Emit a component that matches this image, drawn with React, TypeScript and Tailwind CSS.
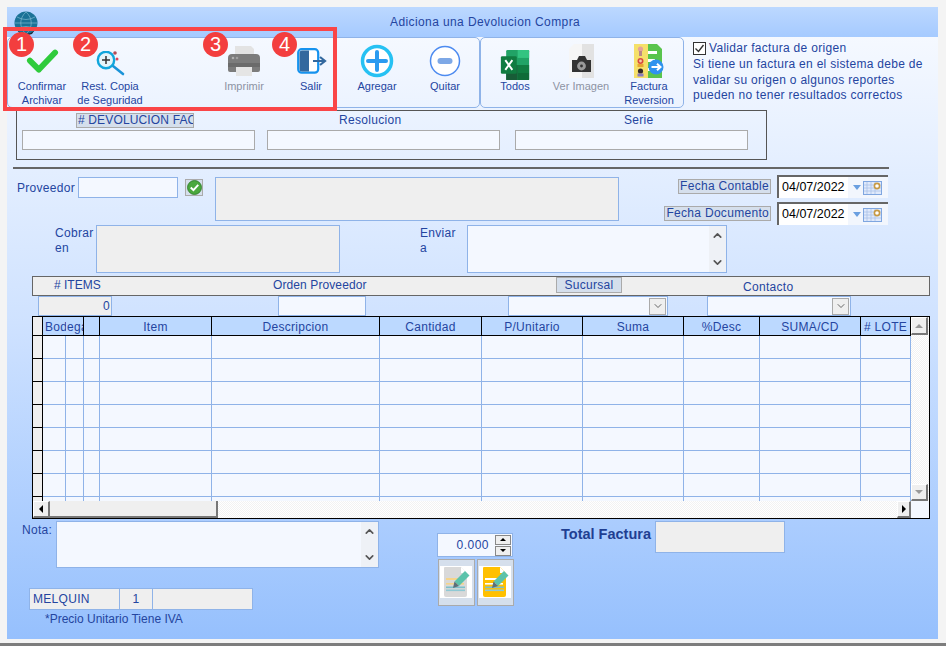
import { ChevronDown, ChevronUp } from "lucide-react";

const txt = "text-[#24459f]";

function Btn({ w, l1, l2, children, gray, ml }: { w: string; l1: string; l2?: string; children: React.ReactNode; gray?: boolean; ml?: string }) {
  return (
    <div className={`flex flex-col items-center shrink-0 ${w} ${ml ?? ""}`}>
      <div className="h-[34px] mt-[6px] flex items-center justify-center">{children}</div>
      <div className={`mt-[1px] text-[11px] leading-[14px] text-center whitespace-nowrap tracking-normal ${gray ? "text-[#8d93a3]" : txt}`}>
        {l1}
        {l2 && <br />}
        {l2}
      </div>
    </div>
  );
}

const CheckIcon = () => (
  <svg width="33" height="27" viewBox="0 0 36 30"><path d="M4 14 L14 24 L32 5" fill="none" stroke="#2fcb3c" strokeWidth="6.5" strokeLinecap="round" strokeLinejoin="round" /></svg>
);
const MagIcon = () => (
  <svg width="30" height="26" viewBox="0 0 30 26" className="mt-[5px] ml-[2px]">
    <circle cx="19" cy="2" r="1.8" fill="#b44a55" /><circle cx="21" cy="8" r="1.5" fill="#e0455a" />
    <path d="M17 15 L27 23" stroke="#1b93d8" strokeWidth="2.6" strokeLinecap="round" />
    <circle cx="10" cy="9" r="8.2" fill="#e6f6fb" stroke="#12a6dc" strokeWidth="2.4" />
    <path d="M10 5 V13 M6 9 H14" stroke="#333" strokeWidth="1.5" />
  </svg>
);
const PrinterIcon = () => (
  <svg width="34" height="32" viewBox="0 0 34 32">
    <path d="M8 1 H24 L27 4 V10 H8 Z" fill="#e3e3e3" />
    <path d="M1 13 Q1 9 5 9 H29 Q33 9 33 13 V25 Q33 27 31 27 H3 Q1 27 1 25 Z" fill="#7c7c7c" />
    <rect x="1" y="18" width="32" height="4" fill="#6b6b6b" />
    <circle cx="6" cy="13" r="1.3" fill="#b0b0b0" /><circle cx="10" cy="13" r="1.3" fill="#a0a0a0" />
    <rect x="9" y="22" width="16" height="9" fill="#e5e5e5" />
  </svg>
);
const DoorIcon = () => (
  <svg width="30" height="26" viewBox="0 0 30 26" className="ml-[1px]">
    <rect x="1.2" y="1.2" width="20" height="23.5" rx="3.5" fill="#fff" stroke="#1592ee" strokeWidth="2.2" />
    <path d="M2.5 5 Q2.5 2.5 5 2.5 H12 V23.5 H5 Q2.5 23.5 2.5 21 Z" fill="#33689e" />
    <path d="M16 13 H27 M23 9 L28 13 L23 17" fill="none" stroke="#33689e" strokeWidth="2.2" />
  </svg>
);
const PlusIcon = () => (
  <svg width="34" height="34" viewBox="0 0 34 34">
    <circle cx="17" cy="17" r="14.5" fill="#fff" stroke="#26c1f3" strokeWidth="3.5" />
    <path d="M17 8 V26 M8 17 H26" stroke="#2b9bf0" strokeWidth="4" strokeLinecap="round" />
  </svg>
);
const MinusIcon = () => (
  <svg width="32" height="32" viewBox="0 0 32 32">
    <circle cx="16" cy="16" r="14.5" fill="#fff" stroke="#4d8bf0" strokeWidth="1.5" />
    <rect x="8.5" y="13" width="15" height="6" rx="3" fill="#7ea8e6" />
  </svg>
);
const ExcelIcon = () => (
  <svg width="32" height="30" viewBox="0 0 32 34" className="mt-[8px]">
    <rect x="6" y="0" width="26" height="34" rx="1.5" fill="#21a366" />
    <rect x="19" y="0" width="13" height="9" fill="#33c481" />
    <rect x="19" y="17" width="13" height="9" fill="#107c41" />
    <rect x="6" y="17" width="13" height="17" fill="#185c37" />
    <rect x="19" y="26" width="13" height="8" fill="#0f6b38" />
    <rect x="0" y="7" width="18" height="20" rx="1.5" fill="#107c41" />
    <path d="M5 11.5 L13 22.5 M13 11.5 L5 22.5" stroke="#fff" strokeWidth="2.2" />
  </svg>
);
const CamDocIcon = () => (
  <svg width="26" height="34" viewBox="0 0 26 34">
    <path d="M1 5 L6 0 H14 V34 H1 Z" fill="#f6f6f6" />
    <rect x="14" y="0" width="12" height="34" fill="#e2e2e2" />
    <path d="M4 16 H9 L11 12 H17 L19 16 H23 V28 H4 Z" fill="#333" />
    <circle cx="13.5" cy="22" r="4.4" fill="#9a9a9a" /><circle cx="13.5" cy="22" r="1.4" fill="#333" />
  </svg>
);
const FacturaIcon = () => (
  <svg width="30" height="34" viewBox="0 0 30 34">
    <rect x="0" y="0" width="14" height="34" fill="#f5e06a" />
    <path d="M14 0 H23 L28 5 V34 H14 Z" fill="#59c44d" />
    <rect x="14" y="7" width="9" height="3" fill="#fff" /><rect x="14" y="15" width="7" height="3" fill="#fff" /><rect x="14" y="24" width="7" height="3" fill="#fff" />
    <circle cx="6.5" cy="5" r="2.6" fill="#e3a39a" /><rect x="5" y="7" width="3" height="5" fill="#b88" />
    <circle cx="6.5" cy="17" r="3" fill="#d84b3f" /><circle cx="6.5" cy="17" r="1.4" fill="#f4c9a8" /><rect x="3.5" y="20" width="6" height="3" fill="#e8a530" />
    <circle cx="6.5" cy="27" r="2.6" fill="#33292a" /><rect x="3.5" y="29.5" width="6" height="3" fill="#8a7ac0" />
    <circle cx="22" cy="23" r="7.5" fill="#2f92ee" />
    <path d="M17.5 23 H26 M23 19.8 L26.5 23 L23 26.2" fill="none" stroke="#fff" strokeWidth="2" />
  </svg>
);
const DocPen = ({ color, line }: { color: string; line: string }) => (
  <svg width="32" height="32" viewBox="0 0 32 32" className="bg-white">
    <path d="M4 2 Q4 1 5 1 H21 L27 7 V29 Q27 31 25 31 H6 Q4 31 4 29 Z" fill={color} />
    <path d="M21 1 L27 7 H21 Z" fill="#fff" />
    <rect x="6" y="12" width="13" height="2" fill={line} />
    <rect x="6" y="17" width="18" height="1.6" fill={line} />
    <rect x="6" y="20.5" width="19" height="1.6" fill="#7cc0cc" />
    <rect x="6" y="23.5" width="19" height="1.6" fill="#8fc9d4" />
    <path d="M25 5 L29.5 9.5 L19 20 L14.5 15.5 Z" fill="#5cc3ab" />
    <path d="M14.5 15.5 L19 20 L13 22 Z" fill="#5d6f7a" />
  </svg>
);
const Globe = () => (
  <svg width="24" height="24" viewBox="0 0 24 24">
    <circle cx="12" cy="12" r="11.5" fill="#1b7297" />
    <path d="M1 12 H23 M12 1 C5 7 5 17 12 23 M12 1 C19 7 19 17 12 23 M3 6 Q12 11 21 6 M3 18 Q12 13 21 18" fill="none" stroke="#8fc4d8" strokeWidth="0.6" />
    <path d="M4 20 Q12 26 20 20 L18 23 Q12 25 6 23 Z" fill="#1d2b36" />
  </svg>
);
const Calendar = () => (
  <svg width="19" height="14" viewBox="0 0 19 14">
    <rect x="0.5" y="0.5" width="18" height="13" fill="#dfe9fb" stroke="#7fa6e0" />
    <path d="M4 1 V13 M8 1 V13 M12 1 V13 M1 4 H18 M1 7 H18 M1 10 H18" stroke="#a9c2ea" strokeWidth="0.8" />
    <circle cx="14" cy="5" r="2.6" fill="#fff" stroke="#c79a45" strokeWidth="1.6" />
  </svg>
);

function DateField() {
  return (
    <div className="flex w-[111px] h-[23px] bg-[#f2f6fd] border-t-2 border-l-2 border-t-[#666] border-l-[#666]">
      <div className="w-[69px] h-full bg-white text-[12.5px] tracking-normal leading-[21px] pl-[3px] text-black whitespace-nowrap">04/07/2022</div>
      <div className="flex items-center pl-[5px] gap-[2px]">
        <div className="w-0 h-0 border-l-[4px] border-r-[4px] border-t-[5px] border-l-transparent border-r-transparent border-t-[#6a9fe0]" />
        <Calendar />
      </div>
    </div>
  );
}

function VStrip({ h }: { h: string }) {
  return (
    <div className={`w-[17px] ${h} bg-[#eef1f6] flex flex-col justify-between items-center py-[3px] shrink-0`}>
      <ChevronUp size={13} strokeWidth={3} color="#555" />
      <ChevronDown size={13} strokeWidth={3} color="#555" />
    </div>
  );
}

function SelectBox({ w, ml }: { w: string; ml: string }) {
  return (
    <div className={`${w} ${ml} h-[20px] border border-[#8fb3e8] bg-[#f4f8ff] flex items-center justify-end pr-[1px] shrink-0`}>
      <div className="w-[17px] h-[17px] bg-[#efefef] border border-[#aaa] flex items-center justify-center">
        <ChevronDown size={12} strokeWidth={1.6} color="#444" />
      </div>
    </div>
  );
}

const cols: [string, number][] = [
  ["", 10],
  ["Bod", 23],
  ["ega", 18],
  ["", 16],
  ["Item", 112],
  ["Descripcion", 168],
  ["Cantidad", 102],
  ["P/Unitario", 101],
  ["Suma", 101],
  ["%Desc", 76],
  ["SUMA/CD", 101],
  ["# LOTE", 50],
];
const rows = [0, 1, 2, 3, 4, 5, 6, 7];

function ScrollBtn({ children, cls }: { children: React.ReactNode; cls: string }) {
  return (
    <div className={`${cls} bg-[#efefef] border-r-2 border-b-2 border-r-[#777] border-b-[#777] border-t border-l border-t-white border-l-white flex items-center justify-center shrink-0`}>
      {children}
    </div>
  );
}

const hatch = "bg-[repeating-conic-gradient(#f2f2f2_0%_25%,#ffffff_0%_50%)] bg-[length:2px_2px]";

export default function App() {
  return (
    <div className="relative w-[946px] h-[646px] bg-[#f4f4f4] pt-[7px] pl-[7px] font-['Liberation_Sans',Arial,sans-serif] tracking-[0.3px] text-[12px] overflow-hidden">
      <div className="w-[931px] h-[632px] flex flex-col bg-gradient-to-b from-[#f9fbff] via-[#cfe2ff] to-[#96c0fd]">
        {/* Title */}
        <div className="h-[30px] shrink-0 flex items-center bg-gradient-to-b from-[#bcd8ff] to-[#a5caff]">
          <div className="ml-[7px] mt-[2px] shrink-0"><Globe /></div>
          <div className={`ml-[352px] tracking-[0.4px] ${txt}`}>Adiciona una Devolucion Compra</div>
        </div>

        {/* Toolbar */}
        <div className="h-[71px] shrink-0 flex">
          <div className="w-[473px] h-[71px] border border-[#8fb3e8] rounded-[5px] flex shrink-0">
            <Btn w="w-[68px]" l1="Confirmar" l2="Archivar"><CheckIcon /></Btn>
            <Btn w="w-[68px]" l1="Rest. Copia" l2="de Seguridad"><MagIcon /></Btn>
            <Btn w="w-[68px]" ml="ml-[66px]" l1="Imprimir" gray><PrinterIcon /></Btn>
            <Btn w="w-[66px]" l1="Salir"><DoorIcon /></Btn>
            <Btn w="w-[66px]" l1="Agregar"><PlusIcon /></Btn>
            <Btn w="w-[68px]" ml="ml-[1px]" l1="Quitar"><MinusIcon /></Btn>
          </div>
          <div className="w-[204px] h-[71px] border border-[#8fb3e8] rounded-[5px] flex shrink-0 pl-[1px]">
            <Btn w="w-[66px]" l1="Todos"><ExcelIcon /></Btn>
            <Btn w="w-[66px]" l1="Ver Imagen" gray><CamDocIcon /></Btn>
            <Btn w="w-[70px]" l1="Factura" l2="Reversion"><FacturaIcon /></Btn>
          </div>
          <div className={`ml-[9px] mt-[4px] leading-[15.5px] whitespace-nowrap ${txt}`}>
            <div className="flex items-center gap-[3px]">
              <div className="w-[13px] h-[13px] border border-[#333] bg-white flex items-center justify-center shrink-0">
                <svg width="11" height="11" viewBox="0 0 11 11"><path d="M1.5 5.5 L4.5 8.5 L9.5 2" fill="none" stroke="#333" strokeWidth="1.4" /></svg>
              </div>
              <span className="leading-[14px]">Validar factura de origen</span>
            </div>
            <div className="mt-[2px]">Si tiene un factura en el sistema debe de</div>
            <div>validar su origen o algunos reportes</div>
            <div>pueden no tener resultados correctos</div>
          </div>
        </div>

        {/* Fieldset */}
        <div className="mt-[2px] ml-[9px] w-[751px] h-[50px] shrink-0 border border-[#555] flex pl-[5px] gap-[12px]">
          <div className="w-[233px] shrink-0">
            <div className="ml-[54px] mt-[2px] w-[118px] h-[15px] bg-[#d5dfec] border border-[#aaa] overflow-hidden whitespace-nowrap leading-[13px] pl-[1px] tracking-[0.15px] text-[#24459f]">
              # DEVOLUCION FAC
            </div>
            <div className="mt-[2px] h-[20px] bg-[#f4f8ff] border border-[#aaa]" />
          </div>
          <div className="w-[233px] shrink-0">
            <div className={`h-[15px] mt-[2px] pl-[72px] leading-[15px] ${txt}`}>Resolucion</div>
            <div className="mt-[2px] h-[20px] bg-[#f4f8ff] border border-[#aaa]" />
          </div>
          <div className="w-[233px] shrink-0 ml-[3px]">
            <div className={`h-[15px] mt-[2px] pl-[109px] leading-[15px] ${txt}`}>Serie</div>
            <div className="mt-[2px] h-[20px] bg-[#f4f8ff] border border-[#aaa]" />
          </div>
        </div>

        <div className="mt-[7px] ml-[6px] w-[876px] h-[2px] bg-[#666] shrink-0" />

        {/* Proveedor */}
        <div className="mt-[6px] h-[50px] flex shrink-0">
          <div className={`ml-[10px] w-[61px] mt-[4px] shrink-0 ${txt}`}>Proveedor</div>
          <div className="mt-[2px] w-[100px] h-[21px] border border-[#8fb3e8] bg-[#f4f8ff] shrink-0" />
          <div className="ml-[7px] mt-[4px] w-[18px] h-[17px] bg-[#d5dfec] border border-[#aaa] flex items-center justify-center shrink-0">
            <svg width="15" height="15" viewBox="0 0 14 14"><circle cx="7" cy="7" r="6.5" fill="#4aa83e" stroke="#2d7a28" strokeWidth="0.8" /><path d="M3.5 7 L6 9.5 L10.5 4.5" fill="none" stroke="#fff" strokeWidth="1.8" /></svg>
          </div>
          <div className="ml-[12px] mt-[2px] w-[404px] h-[44px] bg-[#efefef] border border-[#8fb3e8] shrink-0" />
          <div className="w-[269px] flex flex-col items-end shrink-0">
            <div className="flex items-start gap-[6px]">
              <div className={`mt-[4px] h-[15px] px-[1px] leading-[13px] bg-[#d5dfec] border border-[#aaa] whitespace-nowrap ${txt}`}>Fecha Contable</div>
              <DateField />
            </div>
            <div className="flex items-start gap-[6px] mt-[4px]">
              <div className={`mt-[4px] h-[15px] px-[1px] leading-[13px] bg-[#d5dfec] border border-[#aaa] whitespace-nowrap ${txt}`}>Fecha Documento</div>
              <DateField />
            </div>
          </div>
        </div>

        {/* Cobrar / Enviar */}
        <div className="h-[48px] flex shrink-0">
          <div className={`ml-[48px] w-[41px] leading-[15px] mt-[1px] shrink-0 ${txt}`}>Cobrar<br />en</div>
          <div className="w-[244px] h-[48px] bg-[#efefef] border border-[#8fb3e8] shrink-0" />
          <div className={`ml-[80px] w-[47px] leading-[15px] mt-[1px] shrink-0 ${txt}`}>Enviar<br />a</div>
          <div className="w-[260px] h-[48px] bg-[#f4f8ff] border border-[#8fb3e8] flex justify-end shrink-0">
            <VStrip h="h-[46px]" />
          </div>
        </div>

        {/* Bar */}
        <div className="mt-[3px] ml-[25px] w-[898px] h-[20px] bg-[#efefef] border border-[#666] flex shrink-0">
          <div className={`ml-[21px] w-[219px] leading-[17px] tracking-normal shrink-0 ${txt}`}># ITEMS</div>
          <div className={`w-[283px] leading-[17px] tracking-[0.1px] whitespace-nowrap shrink-0 ${txt}`}>Orden Proveedor</div>
          <div className={`w-[66px] h-[16px] bg-[#d5dfec] border border-[#aaa] text-center leading-[14px] shrink-0 ${txt}`}>Sucursal</div>
          <div className={`ml-[121px] mt-[2px] leading-[17px] whitespace-nowrap ${txt}`}>Contacto</div>
        </div>

        {/* Inputs */}
        <div className="h-[20px] flex shrink-0">
          <div className={`ml-[31px] w-[74px] h-[20px] bg-[#efefef] border border-[#8fb3e8] text-right pr-[1px] leading-[18px] shrink-0 ${txt}`}>0</div>
          <div className="ml-[166px] w-[88px] h-[20px] bg-[#f4f8ff] border border-[#8fb3e8] shrink-0" />
          <SelectBox w="w-[160px]" ml="ml-[142px]" />
          <SelectBox w="w-[144px]" ml="ml-[39px]" />
        </div>

        {/* Grid */}
        <div className="ml-[25px] w-[898px] h-[203px] border border-black bg-[#f4f8ff] flex flex-col shrink-0 overflow-hidden">
          <div className="flex h-[184px] shrink-0">
            <div className="w-[878px] shrink-0 overflow-hidden">
              <div className="flex h-[19px] border-b border-black">
                {cols.map(([t, w], i) => (
                  <div
                    key={i}
                    style={{ width: w }}
                    className={`shrink-0 h-full overflow-hidden whitespace-nowrap leading-[20px] ${txt} ${i === 0 ? "bg-[#efefef]" : "bg-[#bcd9ff]"} ${i === 1 ? "" : "border-r border-black"} ${i === 1 ? "pl-[2px]" : i === 2 ? "pl-[1px]" : "text-center"}`}
                  >
                    {t}
                  </div>
                ))}
              </div>
              {rows.map((r) => (
                <div key={r} className="flex h-[23px] border-b border-[#8fb3e8]">
                  {cols.map(([, w], i) => (
                    <div
                      key={i}
                      style={{ width: w }}
                      className={`shrink-0 h-[23px] ${i === 0 ? "bg-[#efefef] border-r border-b border-black" : "border-r border-[#8fb3e8]"}`}
                    />
                  ))}
                </div>
              ))}
            </div>
            <div className={`w-[18px] flex flex-col justify-between shrink-0 ${hatch}`}>
              <ScrollBtn cls="w-[17px] h-[18px]">
                <div className="w-0 h-0 border-l-[4px] border-r-[4px] border-b-[4px] border-l-transparent border-r-transparent border-b-[#999]" />
              </ScrollBtn>
              <ScrollBtn cls="w-[17px] h-[17px]">
                <div className="w-0 h-0 border-l-[4px] border-r-[4px] border-t-[4px] border-l-transparent border-r-transparent border-t-[#999]" />
              </ScrollBtn>
            </div>
          </div>
          <div className="flex h-[17px] shrink-0">
            <ScrollBtn cls="w-[17px] h-[17px]">
              <div className="w-0 h-0 border-t-[4px] border-b-[4px] border-r-[4px] border-t-transparent border-b-transparent border-r-black" />
            </ScrollBtn>
            <div className="w-[168px] h-[17px] bg-[#efefef] border-r-2 border-b-2 border-r-[#777] border-b-[#777] shrink-0" />
            <div className={`flex-1 h-[17px] ${hatch}`} />
            <ScrollBtn cls="w-[14px] h-[17px]">
              <div className="w-0 h-0 border-t-[4px] border-b-[4px] border-l-[4px] border-t-transparent border-b-transparent border-l-black" />
            </ScrollBtn>
            <div className="w-[18px] h-[17px] shrink-0" />
          </div>
        </div>

        {/* Bottom */}
        <div className="mt-[2px] flex shrink-0">
          <div className="w-[372px] shrink-0">
            <div className="flex">
              <div className={`ml-[15px] w-[34px] mt-[2px] leading-[15px] shrink-0 ${txt}`}>Nota:</div>
              <div className="w-[323px] h-[47px] bg-[#f4f8ff] border border-[#8fb3e8] flex justify-end shrink-0">
                <VStrip h="h-[45px]" />
              </div>
            </div>
            <div className="mt-[20px] ml-[22px] flex h-[22px]">
              <div className={`w-[91px] h-[22px] bg-[#efefef] border border-[#8fb3e8] pl-[3px] leading-[20px] shrink-0 ${txt}`}>MELQUIN</div>
              <div className={`w-[33px] h-[22px] bg-[#efefef] border-y border-r border-[#8fb3e8] text-center leading-[20px] shrink-0 ${txt}`}>1</div>
              <div className="w-[100px] h-[22px] bg-[#efefef] border-y border-r border-[#8fb3e8] shrink-0" />
            </div>
            <div className={`ml-[38px] mt-[2px] leading-[15px] tracking-normal whitespace-nowrap ${txt}`}>*Precio Unitario Tiene IVA</div>
          </div>
          <div className="ml-[58px] mt-[12px] w-[78px] shrink-0">
            <div className="w-[76px] h-[24px] bg-[#f4f8ff] border border-[#8fb3e8] flex items-center justify-end">
              <div className={`text-[12px] tracking-[0.5px] mr-[6px] ${txt}`}>0.000</div>
              <div className="w-[16px] mr-[1px] flex flex-col gap-[1px]">
                <div className="h-[10px] bg-[#efefef] border border-[#888] flex items-center justify-center">
                  <div className="w-0 h-0 border-l-[3px] border-r-[3px] border-b-[3px] border-l-transparent border-r-transparent border-b-black" />
                </div>
                <div className="h-[10px] bg-[#efefef] border border-[#888] flex items-center justify-center">
                  <div className="w-0 h-0 border-l-[3px] border-r-[3px] border-t-[3px] border-l-transparent border-r-transparent border-t-black" />
                </div>
              </div>
            </div>
            <div className="mt-[2px] flex gap-[2px] ml-[1px]">
              <div className="w-[37px] h-[47px] bg-[#d5dfec] border border-[#aaa] pt-[6px] pl-[1px] shrink-0">
                <DocPen color="#d9d9d9" line="#f5d48a" />
              </div>
              <div className="w-[37px] h-[47px] bg-[#d5dfec] border border-[#aaa] pt-[6px] pl-[1px] shrink-0">
                <DocPen color="#ffc000" line="#fff" />
              </div>
            </div>
          </div>
          <div className="ml-[46px] mt-[5px] w-[94px] text-[14.5px] font-bold text-[#1f3f92] tracking-normal whitespace-nowrap leading-[17px] shrink-0">Total Factura</div>
          <div className="w-[130px] h-[32px] bg-[#efefef] border border-[#8fb3e8] shrink-0" />
        </div>
      </div>
      <div className="absolute left-0 right-0 bottom-0 h-[3px] bg-[#7d7d7d]" />

      {/* Annotation overlay */}
      <div className="absolute left-[3px] top-[27px] w-[334px] h-[84px] border-[4px] border-[#fa4547]" />
      {[["1", 9], ["2", 73], ["3", 203], ["4", 272]].map(([n, x]) => (
        <div
          key={n}
          style={{ left: x as number }}
          className="absolute top-[32px] w-[25px] h-[25px] rounded-full bg-[#f33e3e] text-white text-[20px] leading-[25px] text-center tracking-normal"
        >
          {n}
        </div>
      ))}
    </div>
  );
}
